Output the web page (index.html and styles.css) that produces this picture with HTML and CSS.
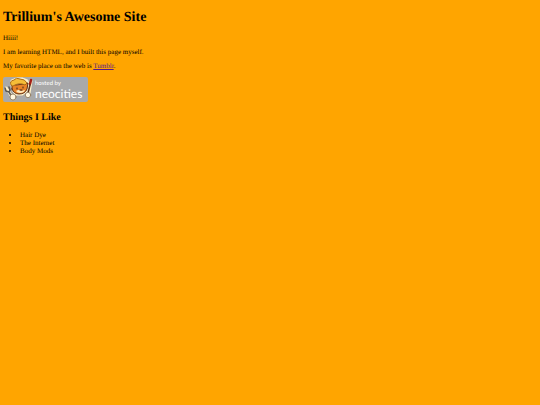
FILE: index.html
```html
<!DOCTYPE html>
<html lang="en">
<head>
<meta charset="utf-8">
<title>Trillium's Awesome Site</title>
<link rel="stylesheet" href="styles.css">
</head>
<body>
<h1>Trillium's Awesome Site</h1>
<p>Hiiii!</p>
<p>I am learning HTML, and I built this page myself.</p>
<p>My favorite place on the web is <a href="#tumblr">Tumblr</a>.</p>
<a class="badge" href="#neocities">
<svg class="cat" viewBox="0 0 32 25" aria-hidden="true">
<g stroke-linecap="round" stroke-linejoin="round">
<path d="M3 11 L6 15 L9 20 M28 4 L26 16 M11 14 L9 8 L9 4 L14 2 L19 2 L24 4 L25 8 L23 14 L19 17 L13 17Z" fill="#fff1c9" stroke="#fff1c9" stroke-width="3"/>
<path d="M2 11 L3 14 L6 15 M6 10 L7 13 L6 15 L9 20" fill="none" stroke="#5c5751" stroke-width="1.5"/>
<path d="M28 3 L27 7" stroke="#a51e15" stroke-width="2.5"/>
<path d="M27 8 L25 16" stroke="#5a321e" stroke-width="1.5"/>
<path d="M9 12 L9 7 L13 8 L21 7 L25 6 L24 12 Q22 17 16 17 Q11 17 9 12Z" fill="#e98328" stroke="#5d2c13"/>
<path d="M8 8 Q6 4 11 3 Q13 0 17 2 Q22 2 24 6 L22 8 Q16 5 10 9Z" fill="#f5bd38" stroke="#a46112" stroke-width=".9"/>
<path d="M13 14 Q16 12 18 14 L22 13 Q21 16 17 16 Q14 16 13 14Z" fill="#ffe9bd"/>
<path d="M14 11 L14 12 M20 10 L20 11 M17 13 L19 13" fill="none" stroke="#392219"/>
<circle cx="10" cy="20" r="3" fill="#fff7df" stroke="#8b7357" stroke-width=".8"/>
<circle cx="25" cy="18" r="2.7" fill="#fff7df" stroke="#8b7357" stroke-width=".8"/>
</g>
</svg>
<span class="label"><span class="small">hosted by</span><span class="brand">neocities</span></span>
</a>
<h2>Things I Like</h2>
<ul>
<li>Hair Dye</li>
<li>The Internet</li>
<li>Body Mods</li>
</ul>
</body>
</html>
```
FILE: styles.css
```css
body {
  margin: 9px 3px;
  background: #ffa500;
  color: #000;
  font: 7px/8px "Liberation Serif", serif;
  text-rendering: geometricPrecision;
}
h1 {
  margin: 0 0 8px;
  font-size: 14px;
  line-height: 17px;
}
p {
  margin: 0 0 6px;
}
p a {
  color: #551a8b;
}
.badge {
  display: flex;
  width: max-content;
  height: 25px;
  margin-top: 7px;
  padding-right: 6px;
  border-radius: 2px;
  background: #a9a9a9;
  color: #fff;
  font-family: Lato, sans-serif;
  text-decoration: none;
}
.cat {
  width: 32px;
  height: 25px;
}
.label {
  display: flex;
  flex-direction: column;
  padding-top: 3px;
}
.small {
  font-size: 6px;
  line-height: 8px;
}
.brand {
  font-size: 12px;
  line-height: 11px;
}
h2 {
  margin: 10px 0 7px;
  font-size: 10px;
  line-height: 12px;
}
ul {
  margin: 0;
  padding-left: 17px;
}
```
